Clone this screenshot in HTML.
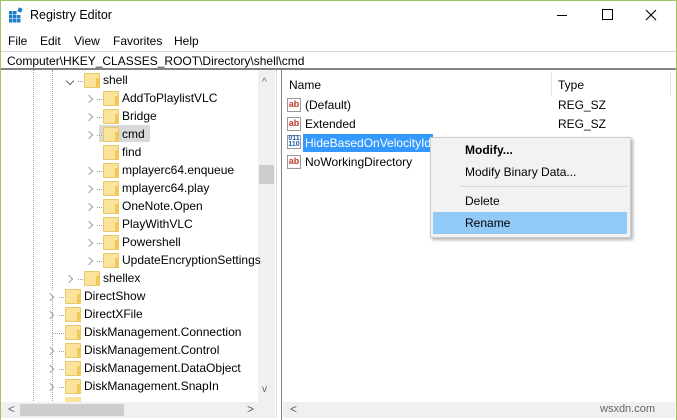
<!DOCTYPE html><html><head><style>
*{margin:0;padding:0;box-sizing:border-box}
body{width:677px;height:420px;overflow:hidden;background:#fff;font-family:"Liberation Sans",sans-serif;font-size:12px;color:#000;position:relative}
.a{position:absolute;white-space:nowrap}
.fold{position:absolute;width:16px;height:15px;background:#fbe39b;border:1px solid #e6c76a;border-radius:1px}
.fold:after{content:"";position:absolute;right:-1px;top:4px;width:4px;height:10px;background:#f0c95a}
.chev{position:absolute;width:6px;height:6px;border-right:1.3px solid #a0a0a0;border-bottom:1.3px solid #a0a0a0;transform:rotate(-45deg)}
.dot{position:absolute;border-top:1px dotted #a0a0a0;width:5px}
.ab{position:absolute;width:14px;height:14px;border:1px solid #999;background:#fff;font-size:9px;font-weight:bold;color:#c0392b;line-height:11px;text-align:center}
</style></head><body>
<div class="a" style="left:0;top:0;width:677px;height:420px;border:1px solid #9ec764;border-bottom:none"></div>
<svg class="a" style="left:8px;top:7px" width="16" height="16"><g fill="#1e7ec8"><rect x="1" y="4" width="3.5" height="3.5"/><rect x="5" y="4" width="3.5" height="3.5"/><rect x="1" y="8" width="3.5" height="3.5"/><rect x="5" y="8" width="3.5" height="3.5"/><rect x="9" y="8" width="3.5" height="3.5"/><rect x="1" y="12" width="3.5" height="3.5"/><rect x="5" y="12" width="3.5" height="3.5"/><rect x="9" y="12" width="3.5" height="3.5"/><rect x="10" y="1" width="4" height="4" transform="rotate(20 12 3)"/></g></svg>
<div class="a" style="left:30px;top:8px;font-size:12.5px">Registry Editor</div>
<div class="a" style="left:557px;top:15px;width:10px;border-top:1px solid #000"></div>
<div class="a" style="left:602px;top:9px;width:11px;height:11px;border:1px solid #000"></div>
<svg class="a" style="left:645px;top:9px" width="12" height="12"><path d="M1 1L11 11M11 1L1 11" stroke="#000" stroke-width="1.1"/></svg>
<div class="a" style="left:8px;top:34px">File</div>
<div class="a" style="left:40px;top:34px">Edit</div>
<div class="a" style="left:74px;top:34px">View</div>
<div class="a" style="left:113px;top:34px">Favorites</div>
<div class="a" style="left:174px;top:34px">Help</div>
<div class="a" style="left:1px;top:51px;width:675px;height:19px;border-top:1px solid #d9d9d9;border-bottom:2px solid #828282;background:#fff"></div>
<div class="a" style="left:7px;top:54px">Computer\HKEY_CLASSES_ROOT\Directory\shell\cmd</div>
<div class="a" style="left:1px;top:70px;width:276px;height:348px;border-right:1px solid #ddd"></div>
<div class="a" style="left:33px;top:70px;height:333px;border-left:1px dotted #a0a0a0"></div>
<div class="a" style="left:52px;top:70px;height:220px;border-left:1px dotted #a0a0a0"></div>
<div class="a" style="left:52px;top:296px;height:107px;border-left:1px dotted #a0a0a0"></div>
<div class="a" style="left:258px;top:70px;width:17px;height:332px;background:#f0f0f0"></div>
<div class="a" style="left:259px;top:165px;width:15px;height:19px;background:#cdcdcd"></div>
<div class="a" style="left:262px;top:77px;font-size:10px;color:#606060">^</div>
<div class="a" style="left:262px;top:384px;font-size:10px;color:#606060">v</div>
<div class="a" style="left:1px;top:402px;width:274px;height:16px;background:#f0f0f0"></div>
<div class="a" style="left:20px;top:404px;width:104px;height:12px;background:#cdcdcd"></div>
<div class="a" style="left:8px;top:402px;color:#606060">&lt;</div>
<div class="a" style="left:247px;top:402px;color:#606060">&gt;</div>
<div class="a" style="left:67px;top:78px;width:6px;height:6px;border-right:1.3px solid #666;border-bottom:1.3px solid #666;transform:rotate(45deg)"></div>
<div class="dot" style="left:78px;top:81px"></div><div class="fold" style="left:84px;top:73px"></div><div class="a" style="left:103px;top:73px">shell</div>
<div class="a" style="left:99px;top:125px;width:51px;height:17px;background:#d9d9d9"></div>
<div class="chev" style="left:86px;top:96px"></div><div class="dot" style="left:97px;top:99px"></div><div class="fold" style="left:103px;top:91px"></div><div class="a" style="left:122px;top:91px">AddToPlaylistVLC</div>
<div class="chev" style="left:86px;top:114px"></div><div class="dot" style="left:97px;top:117px"></div><div class="fold" style="left:103px;top:109px"></div><div class="a" style="left:122px;top:109px">Bridge</div>
<div class="chev" style="left:86px;top:132px"></div><div class="dot" style="left:97px;top:135px"></div><div class="fold" style="left:103px;top:127px"></div><div class="a" style="left:122px;top:127px">cmd</div>
<div class="fold" style="left:103px;top:145px"></div><div class="a" style="left:122px;top:145px">find</div>
<div class="chev" style="left:86px;top:168px"></div><div class="dot" style="left:97px;top:171px"></div><div class="fold" style="left:103px;top:163px"></div><div class="a" style="left:122px;top:163px">mplayerc64.enqueue</div>
<div class="chev" style="left:86px;top:186px"></div><div class="dot" style="left:97px;top:189px"></div><div class="fold" style="left:103px;top:181px"></div><div class="a" style="left:122px;top:181px">mplayerc64.play</div>
<div class="chev" style="left:86px;top:204px"></div><div class="dot" style="left:97px;top:207px"></div><div class="fold" style="left:103px;top:199px"></div><div class="a" style="left:122px;top:199px">OneNote.Open</div>
<div class="chev" style="left:86px;top:222px"></div><div class="dot" style="left:97px;top:225px"></div><div class="fold" style="left:103px;top:217px"></div><div class="a" style="left:122px;top:217px">PlayWithVLC</div>
<div class="chev" style="left:86px;top:240px"></div><div class="dot" style="left:97px;top:243px"></div><div class="fold" style="left:103px;top:235px"></div><div class="a" style="left:122px;top:235px">Powershell</div>
<div class="chev" style="left:86px;top:258px"></div><div class="dot" style="left:97px;top:261px"></div><div class="fold" style="left:103px;top:253px"></div><div class="a" style="left:122px;top:253px">UpdateEncryptionSettings</div>
<div class="chev" style="left:66px;top:276px"></div><div class="dot" style="left:78px;top:279px"></div><div class="fold" style="left:84px;top:271px"></div><div class="a" style="left:103px;top:271px">shellex</div>
<div class="chev" style="left:47px;top:294px"></div><div class="dot" style="left:59px;top:297px"></div><div class="fold" style="left:65px;top:289px"></div><div class="a" style="left:84px;top:289px">DirectShow</div>
<div class="chev" style="left:47px;top:312px"></div><div class="dot" style="left:59px;top:315px"></div><div class="fold" style="left:65px;top:307px"></div><div class="a" style="left:84px;top:307px">DirectXFile</div>
<div class="dot" style="left:53px;top:333px;width:11px"></div><div class="fold" style="left:65px;top:325px"></div><div class="a" style="left:84px;top:325px">DiskManagement.Connection</div>
<div class="chev" style="left:47px;top:348px"></div><div class="dot" style="left:59px;top:351px"></div><div class="fold" style="left:65px;top:343px"></div><div class="a" style="left:84px;top:343px">DiskManagement.Control</div>
<div class="chev" style="left:47px;top:366px"></div><div class="dot" style="left:59px;top:369px"></div><div class="fold" style="left:65px;top:361px"></div><div class="a" style="left:84px;top:361px">DiskManagement.DataObject</div>
<div class="chev" style="left:47px;top:384px"></div><div class="dot" style="left:59px;top:387px"></div><div class="fold" style="left:65px;top:379px"></div><div class="a" style="left:84px;top:379px">DiskManagement.SnapIn</div>
<div class="a" style="left:65px;top:397px;width:16px;height:5px;background:#fbe39b"></div>
<div class="a" style="left:281px;top:70px;width:395px;height:350px;border-left:1px solid #828282"></div>
<div class="a" style="left:551px;top:72px;height:24px;border-left:1px solid #e5e5e5"></div>
<div class="a" style="left:670px;top:72px;height:24px;border-left:1px solid #e5e5e5"></div>
<div class="a" style="left:289px;top:78px">Name</div>
<div class="a" style="left:558px;top:78px">Type</div>
<div class="ab" style="left:287px;top:98px">ab</div><div class="a" style="left:305px;top:98px">(Default)</div><div class="a" style="left:558px;top:98px">REG_SZ</div>
<div class="ab" style="left:287px;top:117px">ab</div><div class="a" style="left:305px;top:117px">Extended</div><div class="a" style="left:558px;top:117px">REG_SZ</div>
<div class="ab" style="left:287px;top:135px;color:#1e5aa8;font-size:7px;line-height:6px">011<br>110</div>
<div class="a" style="left:303px;top:134px;width:130px;height:18px;background:#3399ff"></div>
<div class="a" style="left:305px;top:136px;color:#fff">HideBasedOnVelocityId</div>
<div class="ab" style="left:287px;top:155px">ab</div><div class="a" style="left:305px;top:155px">NoWorkingDirectory</div>
<div class="a" style="left:283px;top:402px;width:392px;height:16px;background:#f0f0f0"></div>
<div class="a" style="left:290px;top:402px;color:#606060">&lt;</div>
<div class="a" style="left:600px;top:403px;font-size:11px;color:#666">wsxdn.com</div>
<div class="a" style="left:430px;top:137px;width:201px;height:101px;background:#f2f2f2;border:1px solid #ccc;box-shadow:2px 2px 3px rgba(0,0,0,.3)"></div>
<div class="a" style="left:465px;top:143px;font-weight:bold">Modify...</div>
<div class="a" style="left:465px;top:165px">Modify Binary Data...</div>
<div class="a" style="left:460px;top:186px;width:167px;border-top:1px solid #d7d7d7"></div>
<div class="a" style="left:433px;top:212px;width:194px;height:22px;background:#91c9f7"></div>
<div class="a" style="left:465px;top:194px">Delete</div>
<div class="a" style="left:465px;top:216px">Rename</div>
</body></html>
